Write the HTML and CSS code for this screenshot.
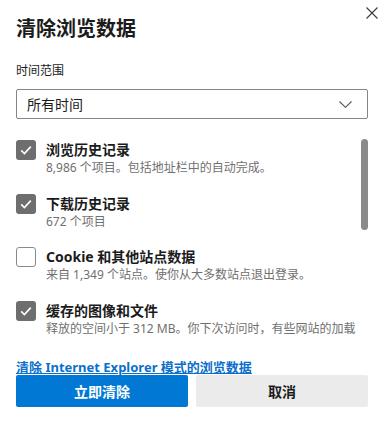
FILE: index.html
```html
<!DOCTYPE html>
<html lang="zh-CN">
<head>
<meta charset="utf-8">
<title>清除浏览数据</title>
<link rel="stylesheet" href="styles.css">
</head>
<body>
<div class="dialog">
  <div class="header">
    <h1 class="title">清除浏览数据</h1>
    <button class="close" aria-label="关闭">
      <svg width="12" height="12" viewBox="0 0 12 12"><path d="M0.5 0.5L11.5 11.5M11.5 0.5L0.5 11.5" stroke="#3b3b3b" stroke-width="1.1" fill="none"/></svg>
    </button>
  </div>
  <div class="range-label">时间范围</div>
  <div class="select">
    <span>所有时间</span>
    <svg width="13" height="7" viewBox="0 0 13 7"><path d="M0.5 0.5L6.5 6.3L12.5 0.5" stroke="#555" stroke-width="1.1" fill="none"/></svg>
  </div>
  <div class="list">
    <div class="items">
      <div class="row">
        <span class="box checked"><svg width="20" height="20" viewBox="0 0 20 20"><path d="M5.2 10.4L8.4 13.6L14.8 6.6" stroke="#fff" stroke-width="1.6" fill="none"/></svg></span>
        <div class="text">
          <div class="label">浏览历史记录</div>
          <div class="sub">8,986 个项目。包括地址栏中的自动完成。</div>
        </div>
      </div>
      <div class="row">
        <span class="box checked"><svg width="20" height="20" viewBox="0 0 20 20"><path d="M5.2 10.4L8.4 13.6L14.8 6.6" stroke="#fff" stroke-width="1.6" fill="none"/></svg></span>
        <div class="text">
          <div class="label">下载历史记录</div>
          <div class="sub">672 个项目</div>
        </div>
      </div>
      <div class="row">
        <span class="box"></span>
        <div class="text">
          <div class="label">Cookie 和其他站点数据</div>
          <div class="sub">来自 1,349 个站点。使你从大多数站点退出登录。</div>
        </div>
      </div>
      <div class="row">
        <span class="box checked"><svg width="20" height="20" viewBox="0 0 20 20"><path d="M5.2 10.4L8.4 13.6L14.8 6.6" stroke="#fff" stroke-width="1.6" fill="none"/></svg></span>
        <div class="text">
          <div class="label">缓存的图像和文件</div>
          <div class="sub">释放的空间小于 312 MB。你下次访问时，有些网站的加载速度可能会变慢。</div>
        </div>
      </div>
    </div>
    <div class="scrollbar"></div>
  </div>
  <a class="ie-link" href="#">清除 Internet Explorer 模式的浏览数据</a>
  <div class="buttons">
    <button class="btn primary">立即清除</button>
    <button class="btn secondary">取消</button>
  </div>
</div>
</body>
</html>
```

FILE: styles.css
```css
* { box-sizing: border-box; }
html, body {
  margin: 0;
  background: #ffffff;
}
body {
  font-family: "Noto Sans", "Noto Sans CJK SC", sans-serif;
  color: #1b1b1b;
}
.dialog {
  width: 388px;
  height: 425px;
  padding: 0 20px 0 16px;
  display: flex;
  flex-direction: column;
}
.header {
  display: flex;
  justify-content: space-between;
  align-items: flex-start;
}
.title {
  margin: 15px 0 0 0;
  font-size: 20px;
  line-height: 28px;
  font-weight: 700;
  color: #1b1b1b;
}
.close {
  border: 0;
  background: transparent;
  padding: 0;
  margin: 7px -10px 0 0;
  width: 12px;
  height: 12px;
  display: flex;
}
.range-label {
  margin-top: 20px;
  font-size: 12px;
  line-height: 16px;
  color: #1b1b1b;
}
.select {
  margin-top: 10px;
  height: 30px;
  border: 1px solid #858585;
  border-radius: 2px;
  display: flex;
  align-items: center;
  justify-content: space-between;
  padding: 0 15px 0 10px;
  font-size: 14px;
  color: #1b1b1b;
}
.list {
  margin-top: 11px;
  height: 207px;
  overflow: hidden;
  display: flex;
  gap: 3px;
}
.items {
  flex: 1;
  padding-top: 10px;
  display: flex;
  flex-direction: column;
  gap: 17.5px;
}
.row {
  display: flex;
  gap: 10px;
  align-items: flex-start;
}
.box {
  flex: none;
  width: 20px;
  height: 20px;
  border: 1px solid #8a8a8a;
  border-radius: 3px;
  background: #fff;
  display: flex;
}
.box.checked {
  border: 0;
  background: #6e6e6e;
}
.text { min-width: 0; }
.label {
  font-size: 14px;
  line-height: 20px;
  font-weight: 700;
  color: #1b1b1b;
}
.sub {
  font-size: 12px;
  line-height: 16px;
  color: #707070;
}
.scrollbar {
  flex: none;
  width: 7px;
  height: 91px;
  margin-top: 9px;
  border-radius: 4px;
  background: #8a8a8a;
}
.ie-link {
  margin-top: 22px;
  align-self: flex-start;
  font-size: 13px;
  line-height: 16px;
  font-weight: 700;
  color: #0a6fcb;
  text-decoration: underline;
  text-underline-offset: 1px;
}
.buttons {
  display: flex;
  gap: 8px;
}
.btn {
  flex: 1;
  height: 32px;
  border: 0;
  border-radius: 2px;
  font-family: inherit;
  font-size: 14px;
  font-weight: 700;
}
.primary {
  background: #0078d4;
  color: #ffffff;
}
.secondary {
  background: #ebebeb;
  color: #1b1b1b;
}
```
